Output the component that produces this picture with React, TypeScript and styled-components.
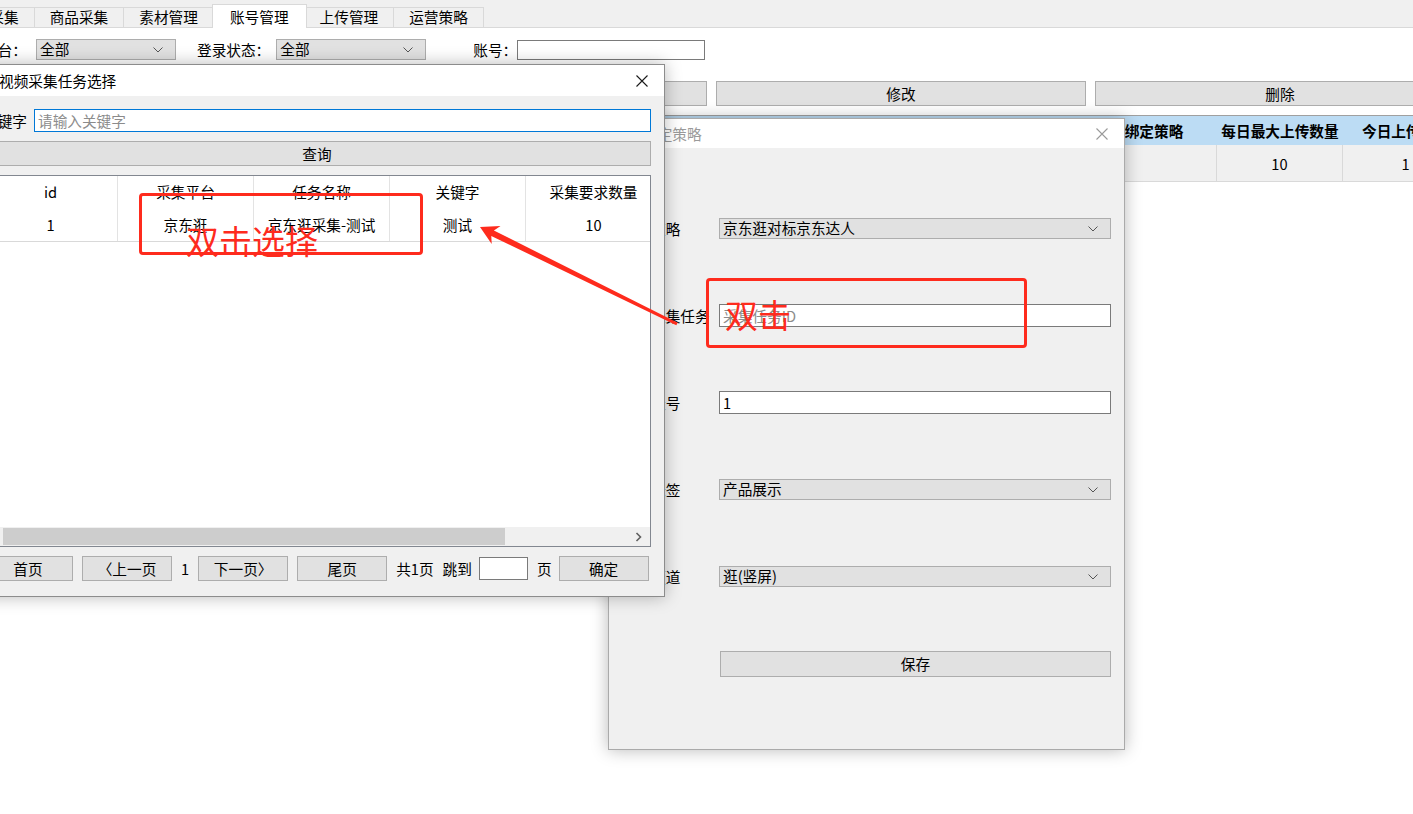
import React from 'react';
import styled, { createGlobalStyle } from 'styled-components';

const FONT = `"Noto Sans CJK SC", "Microsoft YaHei", "Liberation Sans", sans-serif`;
const RED = '#fe2b1d';

const tabs = ['视频采集', '商品采集', '素材管理', '账号管理', '上传管理', '运营策略'];
const actions = ['查询', '新增', '修改', '删除'];

const mainColumns = [
  { title: 'id', width: 83 },
  { title: '平台', width: 126 },
  { title: '账号', width: 126 },
  { title: '昵称', width: 126 },
  { title: '登录状态', width: 126 },
  { title: '采集任务', width: 126 },
  { title: '标签', width: 126 },
  { title: '频道', width: 126 },
  { title: '运营策略', width: 126 },
  { title: '绑定策略', width: 126 },
  { title: '每日最大上传数量', width: 126 },
  { title: '今日上传数量', width: 126 },
];
const mainRow = ['1', '京东逛', '1', '测试账号', '已登录', '', '', '', '', '', '10', '1'];

const taskColumns = [
  { title: 'id', width: 134 },
  { title: '采集平台', width: 136 },
  { title: '任务名称', width: 136 },
  { title: '关键字', width: 136 },
  { title: '采集要求数量', width: 136 },
];
const taskRow = ['1', '京东逛', '京东逛采集-测试', '测试', '10'];

export default function App() {
  return (
    <Page>
      <GlobalStyle />
      <TabStrip>
        {tabs.map((t) => (
          <Tab key={t} $active={t === '账号管理'}>
            {t}
          </Tab>
        ))}
      </TabStrip>

      <Content>
        <FilterRow>
          <FilterLabel>平台：</FilterLabel>
          <Select $width={140} $gap={9}>
            <span>全部</span>
            <Chevron />
          </Select>
          <FilterLabel $gap={21}>登录状态：</FilterLabel>
          <Select $width={150} $gap={6}>
            <span>全部</span>
            <Chevron />
          </Select>
          <FilterLabel $gap={47}>账号：</FilterLabel>
          <TextBox $width={188} $gap={0} />
        </FilterRow>

        <ActionRow>
          {actions.map((a) => (
            <ActionButton key={a}>{a}</ActionButton>
          ))}
        </ActionRow>

        <MainGrid>
          <MainHeader>
            {mainColumns.map((c) => (
              <MainHeadCell key={c.title} $width={c.width}>
                {c.title}
              </MainHeadCell>
            ))}
          </MainHeader>
          <MainDataRow>
            {mainColumns.map((c, i) => (
              <MainCell key={c.title} $width={c.width}>
                {mainRow[i]}
              </MainCell>
            ))}
          </MainDataRow>
        </MainGrid>
      </Content>

      <StrategyWindow>
        <TitleBar $height={29}>
          <WindowTitle $inactive $pad={34}>绑定策略</WindowTitle>
          <CloseIcon $color="#9a9a9a" />
        </TitleBar>
        <StrategyBody>
          <FormRow>
            <FormLabel>策略</FormLabel>
            <Select>
              <span>京东逛对标京东达人</span>
              <Chevron />
            </Select>
          </FormRow>
          <FormRow>
            <FormLabel>采集任务</FormLabel>
            <TextBox $tall placeholder="采集任务ID" />
          </FormRow>
          <FormRow>
            <FormLabel>账号</FormLabel>
            <TextBox $tall defaultValue="1" />
          </FormRow>
          <FormRow>
            <FormLabel>标签</FormLabel>
            <Select>
              <span>产品展示</span>
              <Chevron />
            </Select>
          </FormRow>
          <FormRow>
            <FormLabel>频道</FormLabel>
            <Select>
              <span>逛(竖屏)</span>
              <Chevron />
            </Select>
          </FormRow>
          <FormRow>
            <span />
            <SaveButton>保存</SaveButton>
          </FormRow>
        </StrategyBody>
      </StrategyWindow>

      <TaskWindow>
        <TitleBar $height={31}>
          <WindowTitle $pad={28}>视频采集任务选择</WindowTitle>
          <CloseIcon $color="#1a1a1a" />
        </TitleBar>
        <TaskBody>
          <KeywordRow>
            <span>关键字</span>
            <KeywordInput placeholder="请输入关键字" />
          </KeywordRow>
          <WideButton>查询</WideButton>
          <TaskGrid>
            <TaskTable>
              <TaskHeader>
                {taskColumns.map((c) => (
                  <TaskCell key={c.title} $width={c.width}>
                    {c.title}
                  </TaskCell>
                ))}
              </TaskHeader>
              <TaskDataRow>
                {taskColumns.map((c, i) => (
                  <TaskCell key={c.title} $width={c.width}>
                    {taskRow[i]}
                  </TaskCell>
                ))}
              </TaskDataRow>
            </TaskTable>
            <ScrollBar>
              <ScrollArrow />
              <ScrollThumb />
              <ScrollArrow>
                <svg width="7" height="10" viewBox="0 0 7 10">
                  <path d="M1.5 1 L5.5 5 L1.5 9" fill="none" stroke="#606060" strokeWidth="1.6" />
                </svg>
              </ScrollArrow>
            </ScrollBar>
          </TaskGrid>
          <Pager>
            <PagerButton>首页</PagerButton>
            <PagerButton>〈上一页</PagerButton>
            <PagerText>1</PagerText>
            <PagerButton>下一页〉</PagerButton>
            <PagerButton>尾页</PagerButton>
            <PagerText>共1页</PagerText>
            <PagerText>跳到</PagerText>
            <PageInput />
            <PagerText>页</PagerText>
            <PagerButton $shift={-2}>确定</PagerButton>
          </Pager>
        </TaskBody>
      </TaskWindow>

      <Markup $left={139} $top={193} $width={284} $height={62} />
      <MarkupText $left={186} $top={224}>双击选择</MarkupText>
      <Markup $left={706} $top={278} $width={321} $height={70} />
      <MarkupText $left={725} $top={298}>双击</MarkupText>
      <ArrowLayer width="1413" height="814" viewBox="0 0 1413 814">
        <polygon
          points="480,227 500.5,226 493.9,230.5 677.7,322.7 676.3,325.3 491.3,235.9 491.7,244"
          fill={RED}
        />
      </ArrowLayer>
    </Page>
  );
}

function Chevron() {
  return (
    <ChevronIcon width="10" height="6" viewBox="0 0 10 6">
      <path d="M0.5 0.5 L5 5 L9.5 0.5" fill="none" stroke="#555" strokeWidth="1" />
    </ChevronIcon>
  );
}

function CloseIcon({ $color }: { $color: string }) {
  return (
    <CloseBox>
      <svg width="12" height="12" viewBox="0 0 12 12">
        <path d="M0.5 0.5 L11.5 11.5 M11.5 0.5 L0.5 11.5" stroke={$color} strokeWidth="1.1" />
      </svg>
    </CloseBox>
  );
}

const GlobalStyle = createGlobalStyle`
  html, body {
    margin: 0;
    padding: 0;
    background: #ffffff;
    overflow: hidden;
  }
  body {
    font-family: ${FONT};
    font-size: 14.67px;
    color: #000;
  }
  * {
    box-sizing: border-box;
  }
  input {
    font-family: ${FONT};
    font-size: 14.67px;
  }
  input::placeholder {
    color: #8c8c8c;
  }
`;

const Page = styled.div`
  position: relative;
  width: 1413px;
  height: 814px;
  overflow: hidden;
  background: #fff;
`;

const TabStrip = styled.div`
  display: flex;
  align-items: flex-end;
  height: 28px;
  margin-left: -55px;
  background: #f0f0f0;
  border-bottom: 1px solid #d9d9d9;
`;

const Tab = styled.div<{ $active?: boolean }>`
  position: relative;
  height: ${(p) => (p.$active ? '24px' : '20px')};
  margin-bottom: ${(p) => (p.$active ? '-1px' : '0')};
  margin-left: ${(p) => (p.$active ? '-2px' : '-1px')};
  margin-right: ${(p) => (p.$active ? '-2px' : '0')};
  padding: ${(p) => (p.$active ? '2px 17px 0' : '0 15px')};
  display: flex;
  align-items: center;
  border: 1px solid #d9d9d9;
  border-bottom: none;
  background: ${(p) => (p.$active ? '#ffffff' : '#f0f0f0')};
  z-index: ${(p) => (p.$active ? 1 : 0)};
  line-height: 1;
  white-space: nowrap;
`;

const Content = styled.div`
  display: flex;
  flex-direction: column;
  padding-top: 11px;
`;

const FilterRow = styled.div`
  display: flex;
  align-items: center;
  height: 21px;
  margin-left: -17px;
`;

const FilterLabel = styled.span<{ $gap?: number }>`
  margin-left: ${(p) => p.$gap ?? 0}px;
  white-space: nowrap;
`;

const Select = styled.div<{ $width?: number; $gap?: number }>`
  display: flex;
  align-items: center;
  justify-content: space-between;
  width: ${(p) => (p.$width ? `${p.$width}px` : '100%')};
  height: 21px;
  margin-left: ${(p) => p.$gap ?? 0}px;
  padding: 0 12px 0 3px;
  background: #e1e1e1;
  border: 1px solid #adadad;
  line-height: 1;
  white-space: nowrap;
`;

const ChevronIcon = styled.svg`
  flex: none;
`;

const TextBox = styled.input<{ $width?: number; $gap?: number; $tall?: boolean }>`
  width: ${(p) => (p.$width ? `${p.$width}px` : '100%')};
  height: ${(p) => (p.$tall ? '23px' : '20px')};
  margin-left: ${(p) => p.$gap ?? 0}px;
  padding: 0 3px;
  border: 1px solid #7a7a7a;
  background: #fff;
  outline: none;
`;

const ActionRow = styled.div`
  display: flex;
  gap: 9px;
  margin-top: 21px;
  margin-left: -42px;
`;

const ActionButton = styled.div`
  flex: none;
  width: 370px;
  height: 25px;
  display: flex;
  align-items: center;
  justify-content: center;
  background: #e1e1e1;
  border: 1px solid #adadad;
`;

const MainGrid = styled.div`
  margin-top: 9px;
  border-top: 1px solid #a0a0a0;
  white-space: nowrap;
`;

const MainHeader = styled.div`
  display: flex;
  height: 29px;
  background: #bcdcf4;
`;

const MainHeadCell = styled.div<{ $width: number }>`
  flex: none;
  width: ${(p) => p.$width}px;
  display: flex;
  align-items: center;
  justify-content: center;
  font-weight: 700;
`;

const MainDataRow = styled.div`
  display: flex;
  height: 37px;
  background: #f0f0f0;
  border-bottom: 1px solid #d9d9d9;
`;

const MainCell = styled.div<{ $width: number }>`
  flex: none;
  width: ${(p) => p.$width}px;
  display: flex;
  align-items: center;
  justify-content: center;
  border-right: 1px solid #d9d9d9;
`;

const Window = styled.div`
  position: absolute;
  display: flex;
  flex-direction: column;
  background: #f0f0f0;
  border: 1px solid #8c8c8c;
  box-shadow: 0 0 16px rgba(0, 0, 0, 0.28);
`;

const StrategyWindow = styled(Window)`
  left: 608px;
  top: 118px;
  width: 517px;
  height: 632px;
  border-color: #aaaaaa;
`;

const TaskWindow = styled(Window)`
  left: -30px;
  top: 64px;
  width: 695px;
  height: 533px;
`;

const TitleBar = styled.div<{ $height: number }>`
  flex: none;
  display: flex;
  align-items: center;
  justify-content: space-between;
  height: ${(p) => p.$height}px;
  background: #fff;
`;

const WindowTitle = styled.span<{ $inactive?: boolean; $pad: number }>`
  padding-left: ${(p) => p.$pad}px;
  color: ${(p) => (p.$inactive ? '#9a9a9a' : '#000')};
`;

const CloseBox = styled.div`
  width: 44px;
  height: 100%;
  display: flex;
  align-items: center;
  justify-content: center;
`;

const StrategyBody = styled.div`
  display: flex;
  flex-direction: column;
  padding: 37px 13px 0 42px;
`;

const FormRow = styled.div`
  display: grid;
  grid-template-columns: 68px 1fr;
  align-items: center;
  height: 87px;
`;

const FormLabel = styled.span`
  white-space: nowrap;
`;

const SaveButton = styled.div`
  height: 26px;
  margin-left: 1px;
  display: flex;
  align-items: center;
  justify-content: center;
  background: #e1e1e1;
  border: 1px solid #adadad;
`;

const TaskBody = styled.div`
  display: flex;
  flex-direction: column;
  gap: 9px;
  padding: 13px 13px 0 12px;
`;

const KeywordRow = styled.div`
  display: flex;
  align-items: center;
  gap: 7px;
  height: 23px;
  white-space: nowrap;
`;

const KeywordInput = styled.input`
  flex: 1;
  height: 23px;
  padding: 0 3px;
  border: 1px solid #0078d7;
  outline: none;
  background: #fff;
`;

const WideButton = styled.div`
  height: 25px;
  display: flex;
  align-items: center;
  justify-content: center;
  background: #e1e1e1;
  border: 1px solid #adadad;
`;

const TaskGrid = styled.div`
  height: 372px;
  display: flex;
  flex-direction: column;
  background: #fff;
  border: 1px solid #828790;
  overflow: hidden;
`;

const TaskTable = styled.div`
  flex: 1;
  overflow: hidden;
  white-space: nowrap;
`;

const TaskHeader = styled.div`
  display: flex;
  height: 31px;
`;

const TaskDataRow = styled.div`
  display: flex;
  width: 678px;
  height: 35px;
  border-bottom: 1px solid #d9d9d9;
`;

const TaskCell = styled.div<{ $width: number }>`
  flex: none;
  width: ${(p) => p.$width}px;
  display: flex;
  align-items: center;
  justify-content: center;
  border-right: 1px solid #e3e3e3;
`;

const ScrollBar = styled.div`
  flex: none;
  display: flex;
  align-items: center;
  height: 19px;
  background: #f0f0f0;
`;

const ScrollArrow = styled.div`
  width: 17px;
  height: 100%;
  display: flex;
  align-items: center;
  justify-content: center;
  &:last-child {
    margin-left: auto;
    margin-right: 3px;
  }
`;

const ScrollThumb = styled.div`
  width: 502px;
  height: 17px;
  margin-left: 2px;
  background: #cdcdcd;
`;

const Pager = styled.div`
  display: flex;
  align-items: center;
  gap: 9px;
  height: 25px;
  white-space: nowrap;
`;

const PagerButton = styled.div<{ $shift?: number }>`
  flex: none;
  width: 90px;
  height: 25px;
  margin-left: ${(p) => p.$shift ?? 0}px;
  display: flex;
  align-items: center;
  justify-content: center;
  background: #e1e1e1;
  border: 1px solid #adadad;
`;

const PagerText = styled.span`
  flex: none;
`;

const PageInput = styled.input`
  flex: none;
  width: 49px;
  height: 23px;
  margin-left: -2px;
  border: 1px solid #7a7a7a;
  background: #fff;
  outline: none;
`;

const Markup = styled.div<{ $left: number; $top: number; $width: number; $height: number }>`
  position: absolute;
  left: ${(p) => p.$left}px;
  top: ${(p) => p.$top}px;
  width: ${(p) => p.$width}px;
  height: ${(p) => p.$height}px;
  border: 3px solid ${RED};
  border-radius: 4px;
  pointer-events: none;
`;

const MarkupText = styled.span<{ $left: number; $top: number }>`
  position: absolute;
  left: ${(p) => p.$left}px;
  top: ${(p) => p.$top}px;
  font-size: 33px;
  line-height: 1;
  color: ${RED};
  white-space: nowrap;
  pointer-events: none;
`;

const ArrowLayer = styled.svg`
  position: absolute;
  left: 0;
  top: 0;
  pointer-events: none;
`;
